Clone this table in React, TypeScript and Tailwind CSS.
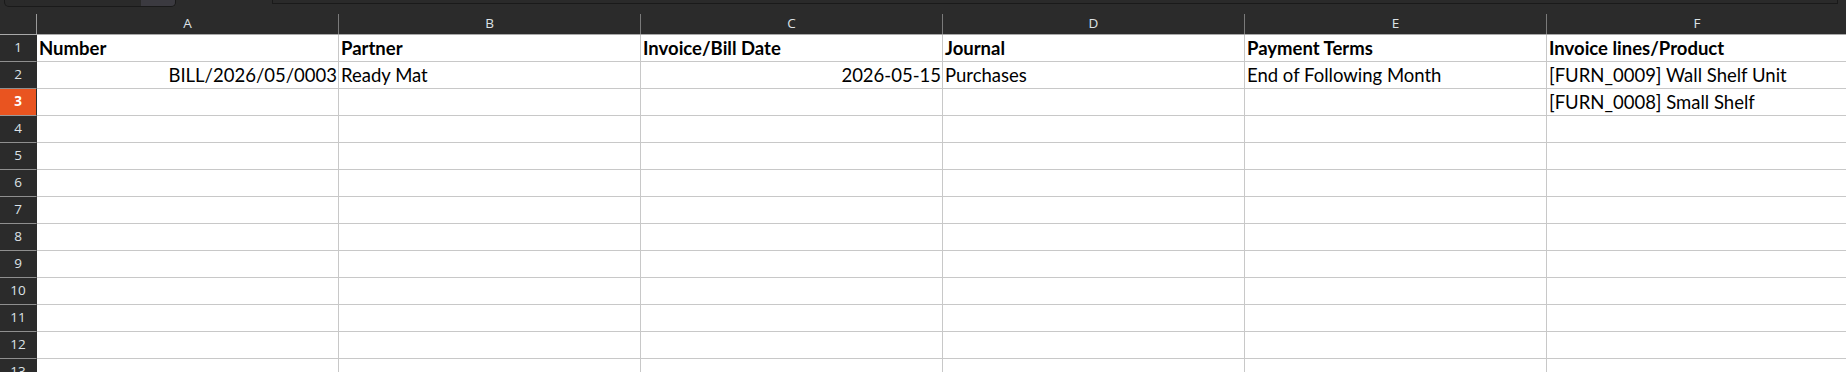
import React from "react";

const cols = ["A", "B", "C", "D", "E", "F"];

type Cell = { t: string; b?: boolean; r?: boolean };

const data: Record<number, Record<number, Cell>> = {
  1: {
    0: { t: "Number", b: true },
    1: { t: "Partner", b: true },
    2: { t: "Invoice/Bill Date", b: true },
    3: { t: "Journal", b: true },
    4: { t: "Payment Terms", b: true },
    5: { t: "Invoice lines/Product", b: true },
  },
  2: {
    0: { t: "BILL/2026/05/0003", r: true },
    1: { t: "Ready Mat" },
    2: { t: "2026-05-15", r: true },
    3: { t: "Purchases" },
    4: { t: "End of Following Month" },
    5: { t: "[FURN_0009] Wall Shelf Unit" },
  },
  3: {
    5: { t: "[FURN_0008] Small Shelf" },
  },
};

const rows = Array.from({ length: 13 }, (_, i) => i + 1);

export default function App() {
  return (
    <div className="h-[372px] w-[1846px] overflow-hidden bg-[#2b2b2b]">
      {/* top strip */}
      <div className="flex h-[14px] items-start">
        <div className="ml-[4px] flex h-[7px] w-[172px] overflow-hidden rounded-b-[5px] border border-t-0 border-[#1a1a1a] bg-[#2a2a2a]">
          <div className="flex-1" />
          <div className="w-[34px] bg-[#3b3a40]" />
        </div>
        <div className="ml-[96px] h-[4px] w-[1566px] border border-t-0 border-[#1a1a1a] bg-[#2a2a2a]" />
      </div>
      {/* column headers */}
      <div
        className="grid h-[21px] border-b border-[#a9a9a9] font-['Open_Sans',sans-serif] text-[13.5px] text-[#dde2e6]"
        style={{ gridTemplateColumns: "37px repeat(5, 302px) 300px" }}
      >
        <div className="border-r border-[#9a9a9a]" />
        {cols.map((c, i) => (
          <div
            key={c}
            className={`flex items-center justify-center leading-none ${
              i < 5 ? "border-r border-[#7a7a7a]" : ""
            }`}
          >
            {c}
          </div>
        ))}
      </div>
      {/* body */}
      <div
        className="grid"
        style={{ gridTemplateColumns: "37px repeat(5, 302px) 300px" }}
      >
        {rows.map((r) => (
          <React.Fragment key={r}>
            <div
              className={`flex h-[27px] items-center justify-center border-b border-r font-['Open_Sans',sans-serif] text-[13.5px] leading-none ${
                r === 3
                  ? "border-b-[#9a9a9a] border-r-[#2b2b2b] bg-[#e95420] font-bold text-white"
                  : "border-b-[#8f8f8f] border-r-[#2b2b2b] bg-[#2b2b2b] text-[#dde2e6]"
              }`}
            >
              {r}
            </div>
            {cols.map((c, i) => {
              const cell = data[r]?.[i];
              return (
                <div
                  key={c}
                  className={`flex h-[27px] items-end overflow-visible whitespace-nowrap border-b border-[#c8c8c8] bg-white pb-[3px] font-['Lato',sans-serif] text-[18.5px] leading-[20px] text-black ${
                    i < 5 ? "border-r" : ""
                  } ${cell?.r ? "justify-end pr-[1px]" : "justify-start pl-[2px]"} ${
                    cell?.b ? "font-bold" : ""
                  }`}
                >
                  {cell?.t ?? ""}
                </div>
              );
            })}
          </React.Fragment>
        ))}
      </div>
    </div>
  );
}
